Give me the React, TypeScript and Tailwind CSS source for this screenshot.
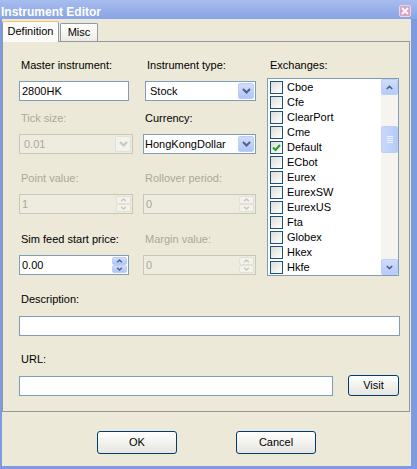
import React from 'react';

const exchanges = [
  'Cboe', 'Cfe', 'ClearPort', 'Cme', 'Default', 'ECbot', 'Eurex',
  'EurexSW', 'EurexUS', 'Fta', 'Globex', 'Hkex', 'Hkfe',
];

const Chevron = ({ up = false, color = '#4D6185', w = 9, h = 6 }: { up?: boolean; color?: string; w?: number; h?: number }) => (
  <svg width={w} height={h} viewBox="0 0 9 6">
    <path d={up ? 'M1 5 4.5 1.5 8 5' : 'M1 1l3.5 3.5L8 1'} stroke={color} strokeWidth="2" fill="none" />
  </svg>
);

const Label = ({ children, disabled }: { children: React.ReactNode; disabled?: boolean }) => (
  <div className={`h-[13px] leading-[13px] pl-[2px] whitespace-nowrap ${disabled ? 'text-[#ACA899]' : 'text-black'}`}>
    {children}
  </div>
);

// combo box with the xp dropdown button
const Combo = ({ value, disabled, className }: { value: string; disabled?: boolean; className: string }) => (
  <div
    className={`mt-[9px] flex h-[20px] items-stretch border p-px ${
      disabled ? 'border-[#C9C7BA] bg-[#EEEBDF] text-[#ACA899]' : 'border-[#7F9DB9] bg-white text-black'
    } ${className}`}
  >
    <div className="flex-1 pl-[3px] leading-[16px] whitespace-nowrap overflow-hidden">{value}</div>
    <div
      className={`flex w-[16px] items-center justify-center rounded-[2px] border ${
        disabled ? 'border-[#E3E1D6] bg-[#F3F2EC]' : 'border-[#BCCEF7] bg-linear-to-b from-[#D0DEFD] to-[#AFC5F7]'
      }`}
    >
      <Chevron color={disabled ? '#C9C7BA' : '#4D6185'} />
    </div>
  </div>
);

// numeric up/down box
const Spinner = ({ value, disabled, className }: { value: string; disabled?: boolean; className: string }) => {
  const btn = disabled
    ? 'border-[#E3E1D6] bg-[#F3F2EC]'
    : 'border-[#BCCEF7] bg-linear-to-b from-[#D0DEFD] to-[#AFC5F7]';
  return (
    <div
      className={`mt-[9px] flex h-[20px] items-stretch border p-px ${
        disabled ? 'border-[#C9C7BA] bg-[#EEEBDF] text-[#ACA899]' : 'border-[#7F9DB9] bg-white text-black'
      } ${className}`}
    >
      <div className="flex-1 pl-[1px] leading-[16px]">{value}</div>
      <div className="flex w-[15px] flex-col">
        <div className={`flex flex-1 items-center justify-center rounded-[2px] border ${btn}`}>
          <Chevron up w={7} h={4} color={disabled ? '#C9C7BA' : '#4D6185'} />
        </div>
        <div className={`flex flex-1 items-center justify-center rounded-[2px] border ${btn}`}>
          <Chevron w={7} h={4} color={disabled ? '#C9C7BA' : '#4D6185'} />
        </div>
      </div>
    </div>
  );
};

const Checkbox = ({ checked }: { checked?: boolean }) => (
  <div className="flex h-[13px] w-[13px] items-center justify-center border border-[#1C5180] bg-linear-to-br from-[#DCDCD7] to-white">
    {checked && (
      <svg width="9" height="9" viewBox="0 0 9 9">
        <path d="M1 4.5 3.5 7 8 2" stroke="#21A121" strokeWidth="2" fill="none" />
      </svg>
    )}
  </div>
);

const XpButton = ({ children, className }: { children: React.ReactNode; className: string }) => (
  <div
    className={`flex items-center justify-center rounded-[3px] border border-[#003C74] bg-linear-to-b from-white to-[#E6E5DE] text-black ${className}`}
  >
    {children}
  </div>
);

export default function App() {
  return (
    <div className="flex h-[469px] w-[417px] flex-col bg-[#ECE9D8] font-['Liberation_Sans',Arial,sans-serif] text-[11px]">
      {/* Title bar */}
      <div className="flex h-[19px] shrink-0 items-start justify-between bg-linear-to-b from-[#A7BDEE] to-[#8AA4E5] pr-[6px]">
        <div className="pl-[1px] pt-[5px] text-[12px] font-bold leading-[14px] text-white">Instrument Editor</div>
        <div className="mt-[5px] flex h-[12px] w-[12px] items-center justify-center rounded-[2px] border border-[#EFD5E3] bg-[#D8A2C2]">
          <svg width="8" height="8" viewBox="0 0 8 8">
            <path d="M1 1l6 6M7 1 1 7" stroke="white" strokeWidth="1.8" />
          </svg>
        </div>
      </div>

      <div className="flex flex-1 flex-col border-b-[3px] border-l-2 border-r-[6px] border-[#7E9AE1]">
        {/* Tabs */}
        <div className="flex h-[22px] shrink-0 items-end">
          <div className="relative z-10 -mb-px flex h-[21px] w-[57px] items-center justify-center rounded-t-[2px] border border-b-0 border-[#919B9C] border-t-[#F6C457] bg-[#FBFBF9] pb-[1px]">
            Definition
          </div>
          <div className="ml-[1px] flex h-[18px] w-[38px] items-center justify-center rounded-t-[2px] border border-b-0 border-[#919B9C] bg-linear-to-b from-white to-[#ECEBE6]">
            Misc
          </div>
        </div>

        {/* Panel */}
        <div className="h-[371px] w-[408px] shrink-0 border border-[#919B9C] bg-[#ECE9D8] pl-[16px] pt-[17px]">
          <div className="flex">
            <div className="flex w-[248px] flex-col">
              <div className="flex">
                <div className="w-[124px]">
                  <Label>Master instrument:</Label>
                  <div className="mt-[9px] h-[20px] w-[110px] border border-[#7F9DB9] bg-white pl-[2px] leading-[18px]">2800HK</div>
                </div>
                <div className="pl-[2px]">
                  <Label>Instrument type:</Label>
                  <Combo value="Stock" className="w-[111px]" />
                </div>
              </div>

              <div className="mt-[11px] flex">
                <div className="w-[124px]">
                  <Label disabled>Tick size:</Label>
                  <Combo value="0.01" disabled className="w-[114px]" />
                </div>
                <div>
                  <Label>Currency:</Label>
                  <Combo value="HongKongDollar" className="w-[113px] [&>div:first-child]:pl-0" />
                </div>
              </div>

              <div className="mt-[18px] flex">
                <div className="w-[124px]">
                  <Label disabled>Point value:</Label>
                  <Spinner value="1" disabled className="w-[114px]" />
                </div>
                <div>
                  <Label disabled>Rollover period:</Label>
                  <Spinner value="0" disabled className="w-[113px]" />
                </div>
              </div>

              <div className="mt-[19px] flex">
                <div className="w-[124px]">
                  <Label>Sim feed start price:</Label>
                  <Spinner value="0.00" className="w-[110px]" />
                </div>
                <div>
                  <Label disabled>Margin value:</Label>
                  <Spinner value="0" disabled className="w-[113px]" />
                </div>
              </div>
            </div>

            {/* Exchanges */}
            <div>
              <div className="h-[13px] pl-[3px] leading-[13px]">Exchanges:</div>
              <div className="mt-[6px] flex h-[198px] w-[132px] border border-[#7F9DB9] bg-white">
                <div className="flex flex-1 flex-col pt-[1px]">
                  {exchanges.map((name) => (
                    <div key={name} className="flex h-[15px] items-center gap-[4px] pl-[2px] leading-[15px]">
                      <Checkbox checked={name === 'Default'} />
                      <span>{name}</span>
                    </div>
                  ))}
                </div>
                <div className="flex w-[17px] flex-col bg-[#F5F4EF]">
                  <div className="flex h-[16px] items-center justify-center rounded-[2px] border border-[#BCCEF7] bg-linear-to-b from-[#D0DEFD] to-[#B5CAF8]">
                    <Chevron up w={7} h={5} />
                  </div>
                  <div className="mt-[31px] flex h-[27px] flex-col items-center justify-center gap-[1px] rounded-[2px] border border-[#BCCEF7] bg-linear-to-r from-[#C9D8FC] to-[#B6CBF8]">
                    <div className="h-px w-[6px] bg-[#EEF3FE]" />
                    <div className="h-px w-[6px] bg-[#EEF3FE]" />
                    <div className="h-px w-[6px] bg-[#EEF3FE]" />
                    <div className="h-px w-[6px] bg-[#EEF3FE]" />
                  </div>
                  <div className="flex-1" />
                  <div className="flex h-[16px] items-center justify-center rounded-[2px] border border-[#BCCEF7] bg-linear-to-b from-[#D0DEFD] to-[#B5CAF8]">
                    <Chevron w={7} h={5} />
                  </div>
                </div>
              </div>
            </div>
          </div>

          <div className="mt-[17px]">
            <Label>Description:</Label>
            <div className="mt-[10px] h-[20px] w-[381px] border border-[#7F9DB9] bg-white" />
          </div>

          <div className="mt-[17px]">
            <Label>URL:</Label>
            <div className="mt-[9px] flex items-center">
              <div className="h-[20px] w-[314px] border border-[#7F9DB9] bg-white" />
              <XpButton className="ml-[15px] h-[21px] w-[51px]">Visit</XpButton>
            </div>
          </div>
        </div>

        {/* Dialog buttons */}
        <div className="flex flex-1 items-start justify-center gap-[59px] pt-[19px]">
          <XpButton className="h-[23px] w-[80px]">OK</XpButton>
          <XpButton className="h-[23px] w-[80px]">Cancel</XpButton>
        </div>
      </div>
    </div>
  );
}
